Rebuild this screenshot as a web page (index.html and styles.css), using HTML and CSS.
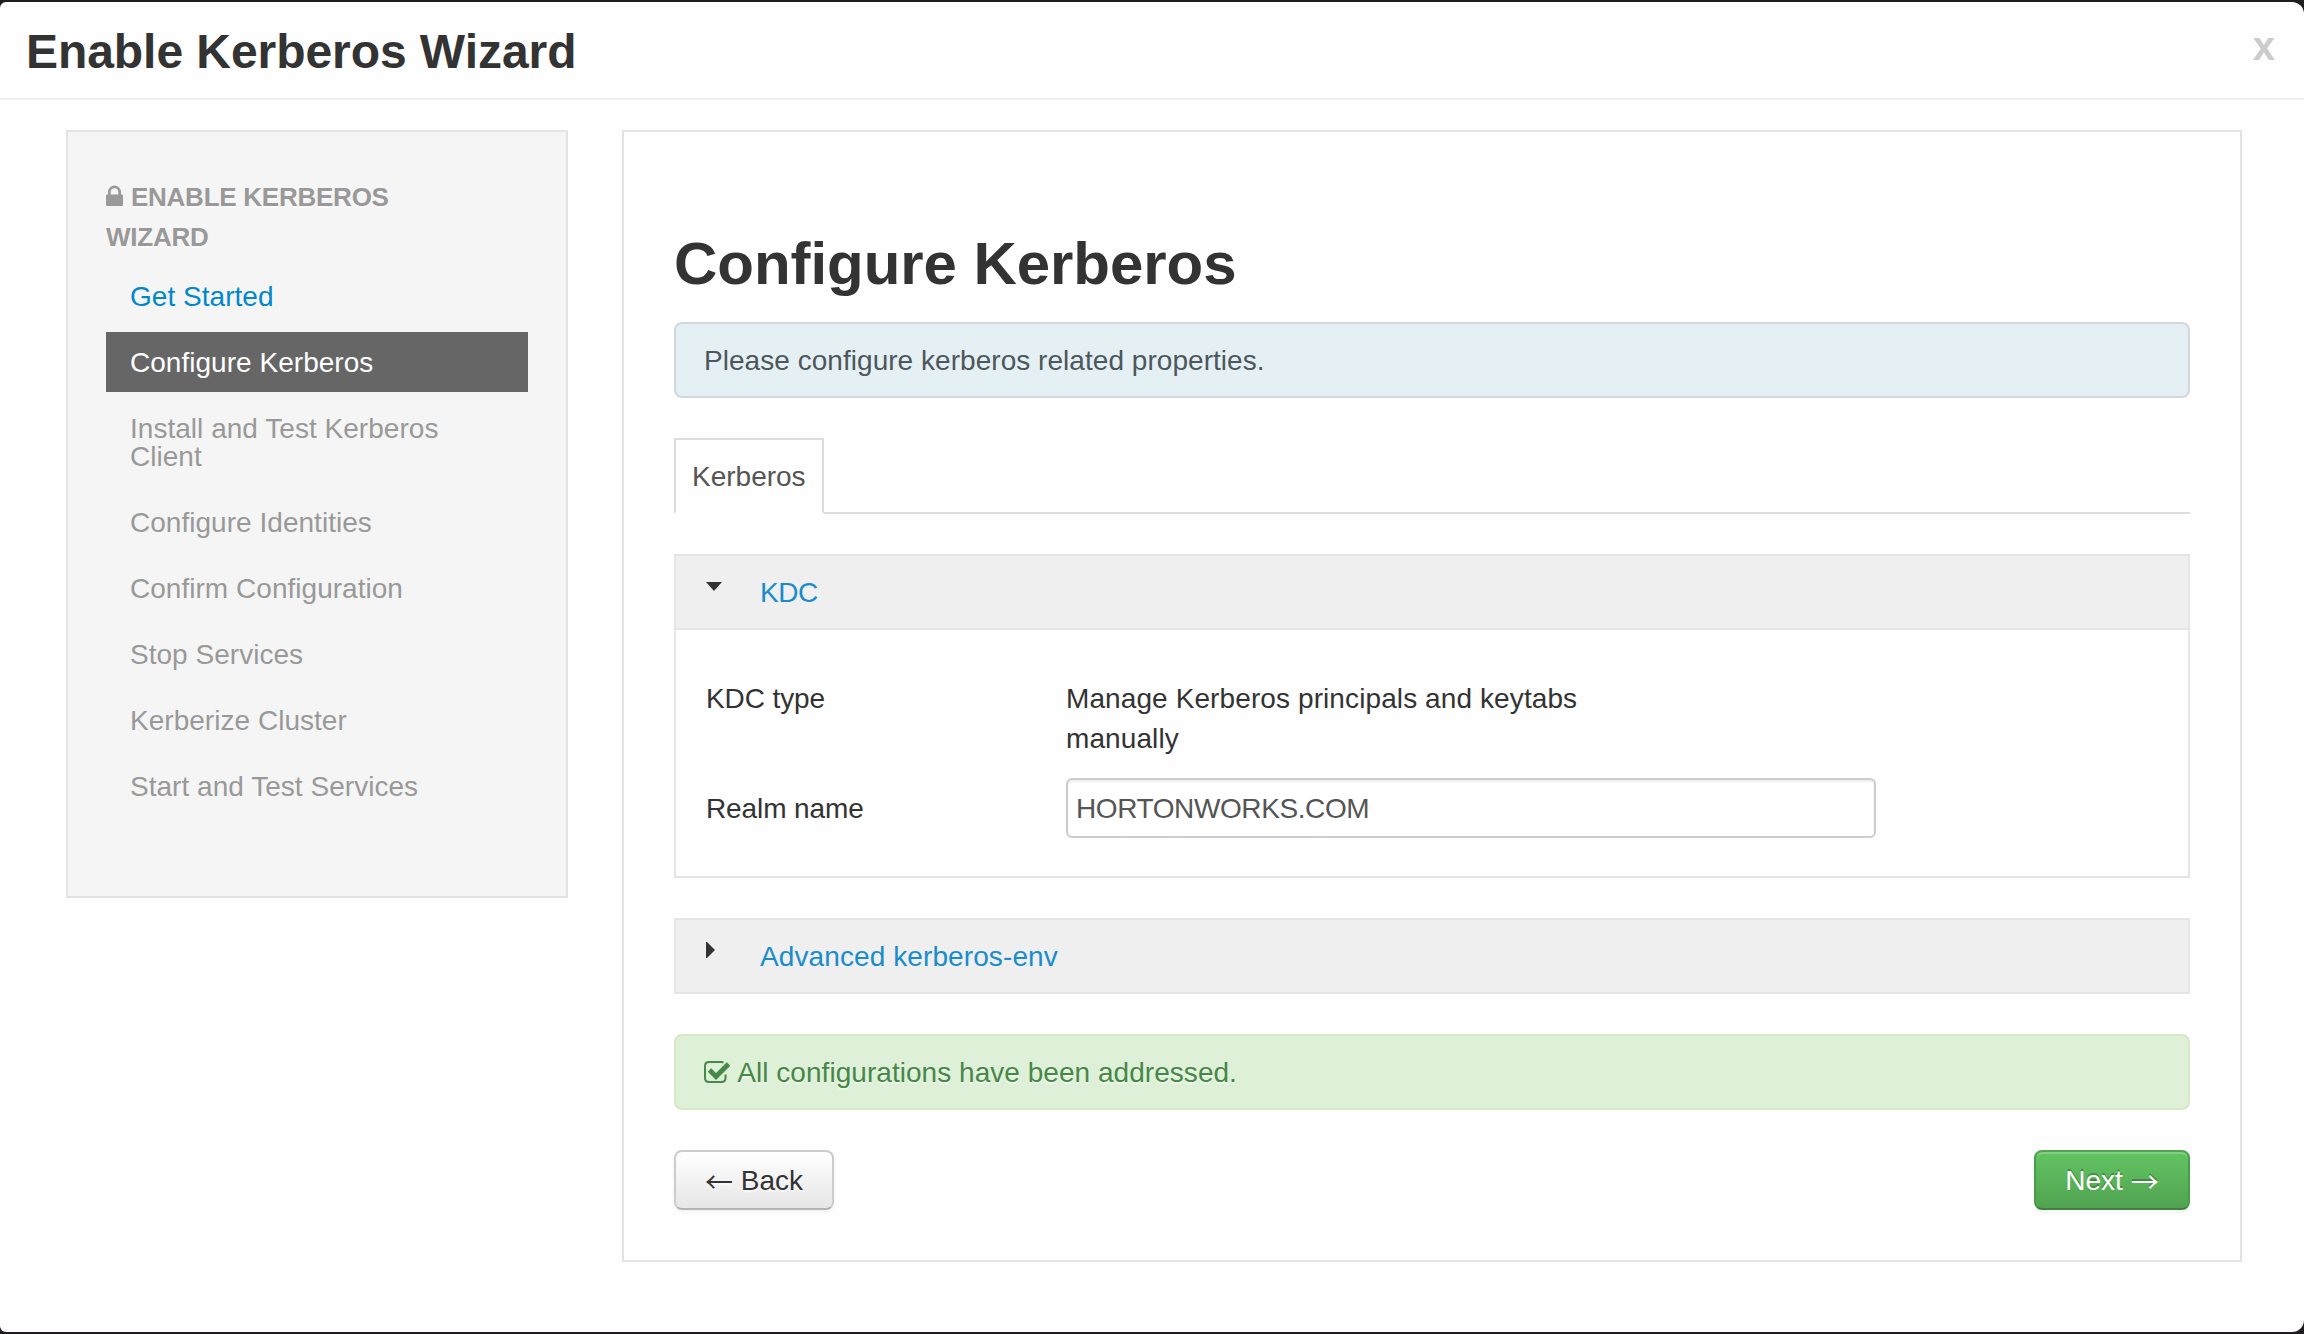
FILE: index.html
```html
<!DOCTYPE html>
<html lang="en">
<head>
<meta charset="utf-8">
<title>Enable Kerberos Wizard</title>
<link rel="stylesheet" href="styles.css">
</head>
<body>
<div class="modal">
  <header class="modal-header">
    <h1 class="modal-title">Enable Kerberos Wizard</h1>
    <button class="close" type="button">x</button>
  </header>
  <div class="modal-body">
    <nav class="sidebar">
      <div class="nav-header"><svg class="icon-lock" viewBox="0 0 17 22" width="17" height="22"><path d="M1.2 9.5H2V7a6.5 6.5 0 0 1 13 0v2.500h.8q1.200 0 1.200 1.200v9.100q0 1.200-1.200 1.200H1.200Q0 21 0 19.800v-9.100Q0 9.500 1.200 9.500zM4.700 9.500h7.600V7a3.800 3.800 0 0 0-7.600 0z" fill="currentColor"/></svg> Enable Kerberos Wizard</div>
      <ul class="steps">
        <li class="step done">Get Started</li>
        <li class="step active">Configure Kerberos</li>
        <li class="step">Install and Test Kerberos Client</li>
        <li class="step">Configure Identities</li>
        <li class="step">Confirm Configuration</li>
        <li class="step">Stop Services</li>
        <li class="step">Kerberize Cluster</li>
        <li class="step">Start and Test Services</li>
      </ul>
    </nav>
    <main class="panel">
      <h2 class="panel-title">Configure Kerberos</h2>
      <div class="alert alert-info">Please configure kerberos related properties.</div>
      <div class="tabs"><div class="tab">Kerberos</div></div>
      <section class="accordion">
        <div class="accordion-heading">
          <svg class="caret" viewBox="0 0 16 16" width="16" height="16"><path d="M0 0h16L8 9z" fill="#333"/></svg>
          <a class="accordion-link kdc">KDC</a>
        </div>
        <div class="accordion-body">
          <div class="field"><span class="field-label">KDC type</span><span class="field-text">Manage Kerberos principals and keytabs manually</span></div>
          <div class="field"><span class="field-label">Realm name</span><input class="field-input" type="text" value="HORTONWORKS.COM"></div>
        </div>
      </section>
      <section class="accordion">
        <div class="accordion-heading">
          <svg class="caret caret-right" viewBox="0 0 16 16" width="16" height="16"><path d="M0 0h1l8 8-8 8H0z" fill="#333"/></svg>
          <a class="accordion-link">Advanced kerberos-env</a>
        </div>
      </section>
      <div class="alert alert-success"><svg class="icon-check" viewBox="0 0 26 22" width="26" height="22"><path d="M19.500 1.500Q18.500 1 17.500 1H5Q1 1 1 5v12q0 4 4 4h12.500q4 0 4-4v-3.500" fill="none" stroke="currentColor" stroke-width="2"/><path d="M5.500 9l6.500 6.500L24.500 3" fill="none" stroke="currentColor" stroke-width="4.800"/></svg> All configurations have been addressed.</div>
      <div class="actions">
        <button class="btn" type="button"><span class="arrow">←</span> Back</button>
        <button class="btn btn-success" type="button">Next <span class="arrow">→</span></button>
      </div>
    </main>
  </div>
</div>
</body>
</html>
```
FILE: styles.css
```css
* { box-sizing: border-box; }
body {
  margin: 0;
  padding: 2px 0;
  height: 1334px;
  background: #1f1d1f;
  color: #333;
  font: 28px/40px "Liberation Sans", Arial, sans-serif;
}
.modal {
  height: 1330px;
  background: #fefefe;
  border-radius: 6px 12px 12px 6px;
}
.modal-header {
  display: flex;
  justify-content: space-between;
  height: 98px;
  padding: 20px 29px 0 26px;
  border-bottom: 2px solid #eee;
}
.modal-title { margin: 0; font-size: 48px; line-height: 60px; letter-spacing: -.06px; }
.close {
  height: 40px;
  margin-top: 4px;
  padding: 0;
  border: 0;
  background: none;
  color: #ccc;
  font: bold 40px/40px "Liberation Sans", Arial, sans-serif;
}
.modal-body {
  display: flex;
  align-items: flex-start;
  gap: 54px;
  padding: 30px 62px 0 66px;
}
.sidebar {
  width: 502px;
  height: 768px;
  padding: 45px 38px;
  background: #f5f5f5;
  border: 2px solid #e3e3e3;
}
.nav-header {
  padding: 0 100px 9px 0;
  color: #999;
  font-size: 26px;
  font-weight: bold;
  letter-spacing: -.25px;
  text-transform: uppercase;
  text-shadow: 0 2px 0 rgba(255, 255, 255, .5);
}
.icon-lock { margin-right: 1px; vertical-align: -1px; }
.steps {
  display: flex;
  flex-direction: column;
  gap: 6px;
  margin: 0;
  padding: 0;
  list-style: none;
}
.step { padding: 17px 60px 15px 24px; line-height: 28px; letter-spacing: .03px; color: #999; }
.step.done { color: #0088cc; }
.step.active { background: #666; color: #fff; }
.panel {
  width: 1620px;
  height: 1132px;
  padding: 92px 50px 0;
  border: 2px solid #e3e3e3;
}
.panel-title { margin: 0 0 18px; font-size: 60px; line-height: 80px; letter-spacing: -.05px; }
.alert {
  height: 76px;
  padding: 17px 28px 15px;
  border: 2px solid;
  border-radius: 8px;
  letter-spacing: .04px;
}
.alert-info { background: #e5f0f5; border-color: #d0d8db; color: #4e575b; }
.alert-success {
  margin-bottom: 40px;
  background: #dff0d8;
  border-color: #d6e9c6;
  color: #468847;
  text-shadow: 0 2px 0 rgba(255, 255, 255, .5);
}
.icon-check { margin-right: 1px; vertical-align: -1px; }
.tabs {
  display: flex;
  height: 76px;
  margin: 40px 0;
  border-bottom: 2px solid #ddd;
}
.tab {
  height: 76px;
  width: 150px;
  padding: 17px 0 0 16px;
  border: 2px solid #ddd;
  border-bottom-color: #fefefe;
  color: #555;
}
.accordion { margin-bottom: 40px; border: 2px solid #e5e5e5; }
.accordion-heading {
  display: flex;
  gap: 38px;
  height: 72px;
  padding: 17px 30px 15px;
  background: #efefef;
}
.caret { margin-top: 9px; flex: none; }
.caret-right { margin-top: 5px; }
.accordion-link { color: #1a8ccc; letter-spacing: .1px; }
.accordion-link.kdc { letter-spacing: -.5px; }
.accordion-body {
  display: flex;
  flex-direction: column;
  gap: 19px;
  height: 248px;
  padding: 49px 30px 0;
  border-top: 2px solid #e5e5e5;
}
.field { display: flex; align-items: flex-start; }
.field-label { width: 360px; letter-spacing: -.1px; }
.field-text { width: 560px; letter-spacing: .1px; }
.field + .field .field-label { padding-top: 11px; }
.field-input {
  width: 810px;
  height: 60px;
  padding: 9px 8px 7px;
  background: #fff;
  border: 2px solid #ccc;
  border-radius: 6px;
  box-shadow: inset 0 2px 2px rgba(0, 0, 0, .075);
  color: #555;
  font: inherit;
  letter-spacing: -.4px;
}
.actions { display: flex; justify-content: space-between; }
.btn {
  width: 160px;
  height: 60px;
  padding: 9px 0 7px;
  border: 2px solid #ccc;
  border-bottom-color: #b3b3b3;
  border-radius: 8px;
  background: linear-gradient(#fff, #e6e6e6) padding-box;
  box-shadow: 0 2px 4px rgba(0, 0, 0, .05);
  color: #333;
  font: inherit;
  line-height: 40px;
  text-shadow: 0 2px 2px rgba(255, 255, 255, .75);
}
.btn-success {
  width: 156px;
  background: linear-gradient(#62c462, #51a351);
  border-color: #52a552 #4c9a4c #3f8240;
  box-shadow: inset 0 2px 0 rgba(255, 255, 255, .2), 0 2px 4px rgba(0, 0, 0, .05);
  color: #fff;
  text-shadow: 0 -2px 0 rgba(0, 0, 0, .25);
}
.arrow {
  font-family: "Noto Sans CJK SC", sans-serif;
  line-height: 0;
  vertical-align: -3px;
}
```
